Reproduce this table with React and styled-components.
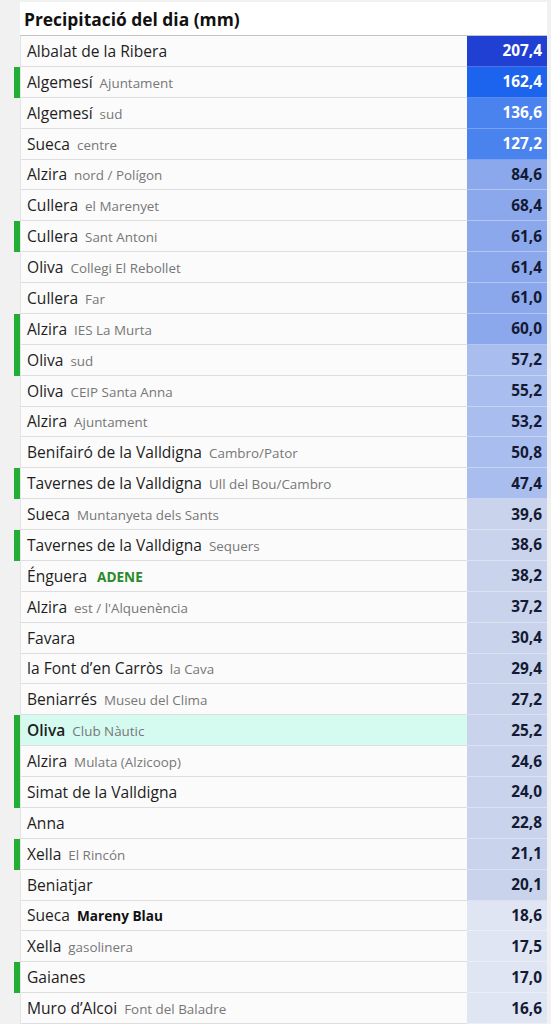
import styled, { createGlobalStyle } from "styled-components";

const GlobalStyle = createGlobalStyle`
  body {
    margin: 0;
    background: #f1f1f1;
    font-family: "Open Sans", "Liberation Sans", sans-serif;
  }
`;

const stations = [
  { name: "Albalat de la Ribera", value: "207,4", level: 0 },
  { name: "Algemesí", sub: "Ajuntament", value: "162,4", level: 1, mark: true },
  { name: "Algemesí", sub: "sud", value: "136,6", level: 2 },
  { name: "Sueca", sub: "centre", value: "127,2", level: 2 },
  { name: "Alzira", sub: "nord / Polígon", value: "84,6", level: 3 },
  { name: "Cullera", sub: "el Marenyet", value: "68,4", level: 3 },
  { name: "Cullera", sub: "Sant Antoni", value: "61,6", level: 3, mark: true },
  { name: "Oliva", sub: "Collegi El Rebollet", value: "61,4", level: 3 },
  { name: "Cullera", sub: "Far", value: "61,0", level: 3 },
  { name: "Alzira", sub: "IES La Murta", value: "60,0", level: 3, mark: true },
  { name: "Oliva", sub: "sud", value: "57,2", level: 4, mark: true },
  { name: "Oliva", sub: "CEIP Santa Anna", value: "55,2", level: 4 },
  { name: "Alzira", sub: "Ajuntament", value: "53,2", level: 4 },
  { name: "Benifairó de la Valldigna", sub: "Cambro/Pator", value: "50,8", level: 4 },
  { name: "Tavernes de la Valldigna", sub: "Ull del Bou/Cambro", value: "47,4", level: 4, mark: true },
  { name: "Sueca", sub: "Muntanyeta dels Sants", value: "39,6", level: 5 },
  { name: "Tavernes de la Valldigna", sub: "Sequers", value: "38,6", level: 5, mark: true },
  { name: "Énguera", sub: "ADENE", subKind: "green", value: "38,2", level: 5 },
  { name: "Alzira", sub: "est / l'Alquenència", value: "37,2", level: 5 },
  { name: "Favara", value: "30,4", level: 5 },
  { name: "la Font d’en Carròs", sub: "la Cava", value: "29,4", level: 5 },
  { name: "Beniarrés", sub: "Museu del Clima", value: "27,2", level: 5 },
  { name: "Oliva", sub: "Club Nàutic", value: "25,2", level: 5, mark: true, active: true },
  { name: "Alzira", sub: "Mulata (Alzicoop)", value: "24,6", level: 5, mark: true },
  { name: "Simat de la Valldigna", value: "24,0", level: 5, mark: true },
  { name: "Anna", value: "22,8", level: 5 },
  { name: "Xella", sub: "El Rincón", value: "21,1", level: 5, mark: true },
  { name: "Beniatjar", value: "20,1", level: 5 },
  { name: "Sueca", sub: "Mareny Blau", subKind: "bold", value: "18,6", level: 6 },
  { name: "Xella", sub: "gasolinera", value: "17,5", level: 6 },
  { name: "Gaianes", value: "17,0", level: 6, mark: true },
  { name: "Muro d’Alcoi", sub: "Font del Baladre", value: "16,6", level: 6 },
];

const levelColors = ["#1f40d2", "#1c64ee", "#4a82ee", "#8ba8ec", "#a9bdef", "#c9d3ec", "#dfe5f2"];

const Page = styled.div`
  padding: 2px 4px 0 14px;
`;

const Title = styled.h1`
  margin: 0 0 0 6px;
  height: 33px;
  padding-left: 4px;
  display: flex;
  align-items: center;
  background: #fff;
  border-bottom: 1px solid #c4c4c4;
  font-size: 17.4px;
  font-weight: 700;
  color: #111;
`;

const Row = styled.div`
  display: grid;
  grid-template-columns: 6px 1fr 80px;
  height: 30.875px;
`;

const Marker = styled.div`
  background: ${(p) => (p.$on ? "#22ad35" : "transparent")};
`;

const NameCell = styled.div`
  display: flex;
  align-items: center;
  padding-left: 6px;
  border-left: 1px solid #e4e4e4;
  border-bottom: 1px solid #dedede;
  background: ${(p) => (p.$active ? "#d5fbf1" : "#fbfbfb")};
  white-space: nowrap;
  overflow: hidden;
`;

const Label = styled.div`
  display: flex;
  align-items: baseline;
  gap: 7px;
`;

const Name = styled.span`
  font-size: 15.6px;
  color: #1e1e1e;
  font-weight: ${(p) => (p.$active ? 600 : 400)};
`;

const Sub = styled.span`
  font-size: ${(p) => (p.$kind ? "13.6px" : "13.4px")};
  color: ${(p) => (p.$kind === "green" ? "#2a8a2a" : p.$kind === "bold" ? "#111" : "#777")};
  font-weight: ${(p) => (p.$kind ? 700 : 400)};
  margin-left: ${(p) => (p.$kind === "green" ? "3px" : "0")};
`;

const ValueCell = styled.div`
  display: flex;
  align-items: center;
  justify-content: flex-end;
  padding-right: 5px;
  background: ${(p) => levelColors[p.$level]};
  color: ${(p) => (p.$level < 3 ? "#fff" : "#141a33")};
  font-size: 15.4px;
  font-weight: 700;
  border-bottom: 1px solid ${(p) => (p.$level < 3 ? "rgba(255,255,255,0.25)" : "rgba(255,255,255,0.35)")};
`;

export default function App() {
  return (
    <Page>
      <GlobalStyle />
      <Title>Precipitació del dia (mm)</Title>
      {stations.map((s, i) => (
        <Row key={i}>
          <Marker $on={s.mark} />
          <NameCell $active={s.active}>
            <Label>
              <Name $active={s.active}>{s.name}</Name>
              {s.sub && <Sub $kind={s.subKind}>{s.sub}</Sub>}
            </Label>
          </NameCell>
          <ValueCell $level={s.level}>{s.value}</ValueCell>
        </Row>
      ))}
    </Page>
  );
}
